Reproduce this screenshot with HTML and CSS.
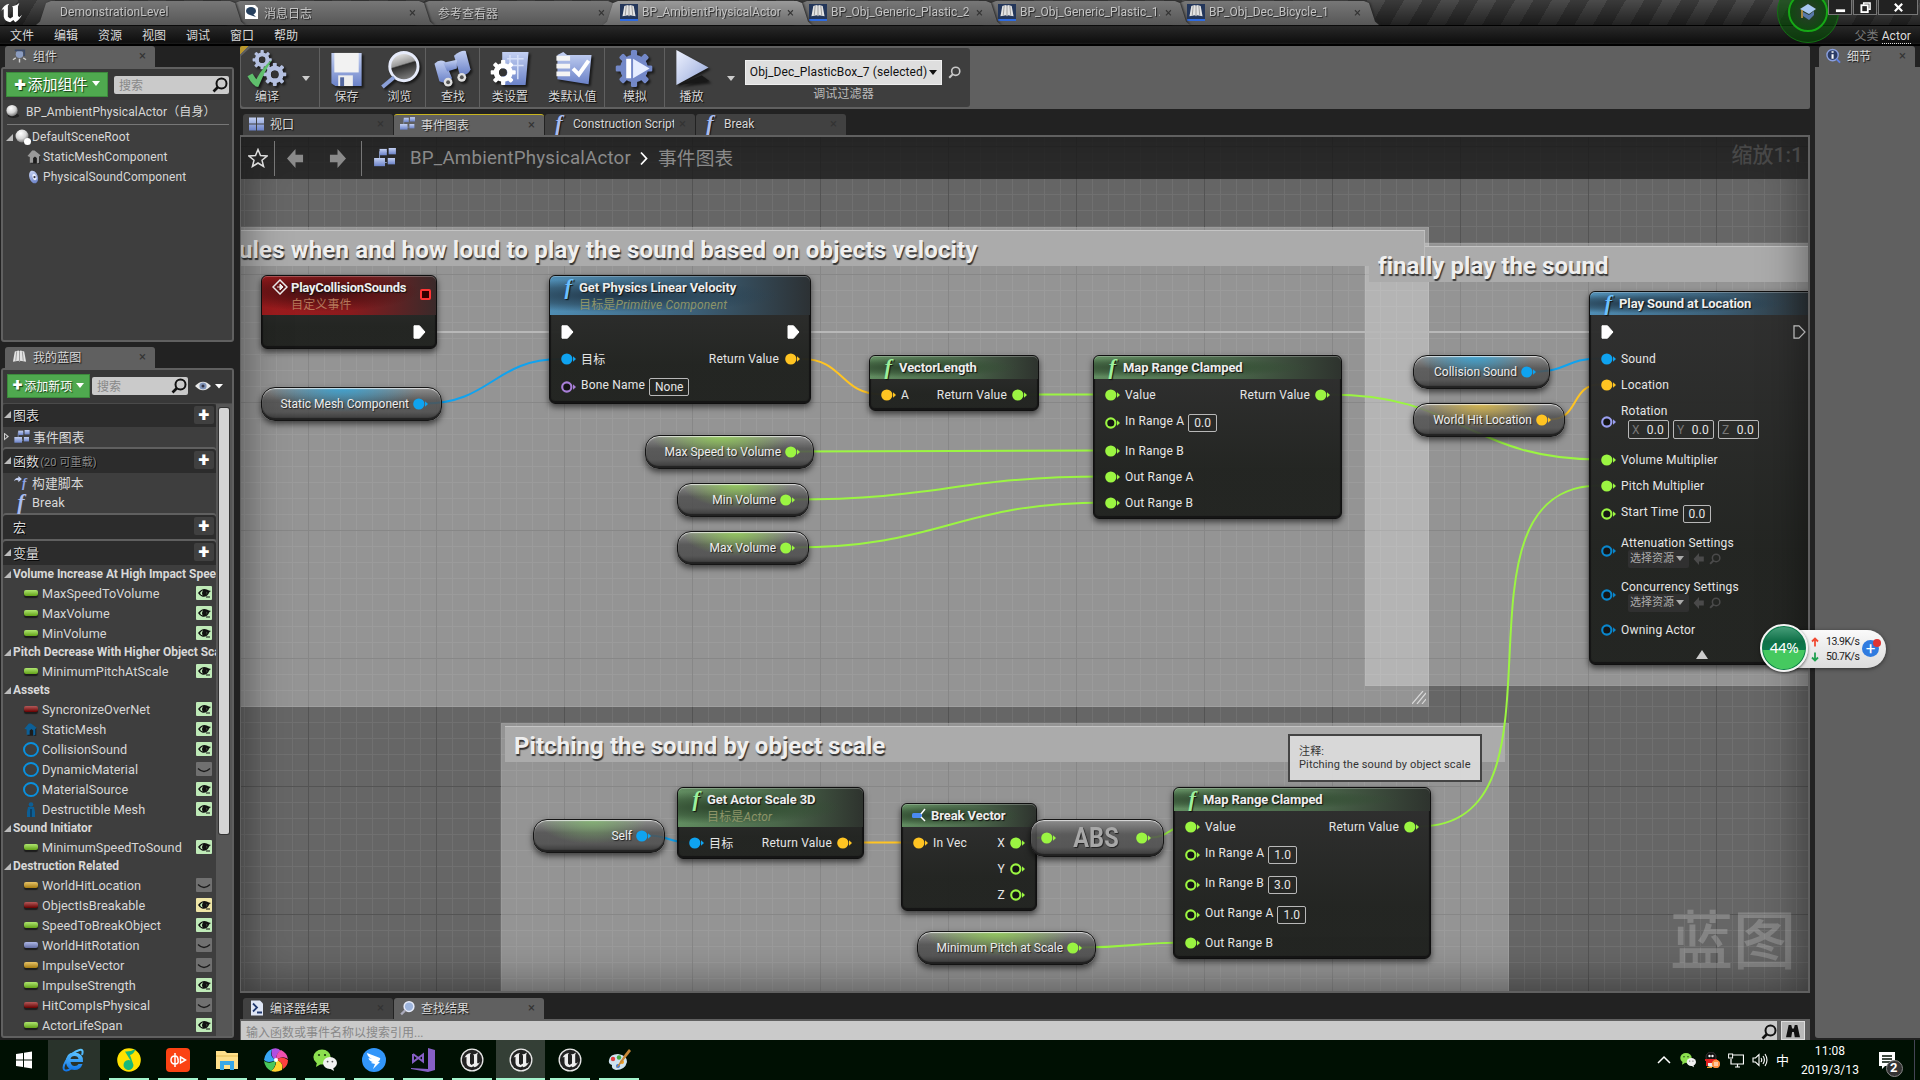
FILE: index.html
```html
<!DOCTYPE html>
<html lang="zh-CN">
<head>
    <meta charset="UTF-8">
    <title>BP_AmbientPhysicalActor</title>
    <link rel="stylesheet" href="styles.css">
</head>
<body>
    <svg class="sprite" width="0" height="0">
        <defs>
            <linearGradient id="gBlue" x1="0" y1="0" x2="0" y2="1"><stop offset="0" stop-color="#c3d0f2"/><stop offset="1" stop-color="#6b82c8"/></linearGradient>
            <linearGradient id="gPlay" x1="0" y1="0" x2="1" y2="1"><stop offset="0" stop-color="#eef2ff"/><stop offset="0.5" stop-color="#c2cdec"/><stop offset="1" stop-color="#8c9fd4"/></linearGradient>
            <linearGradient id="gLens" x1="0" y1="0" x2="0.3" y2="1"><stop offset="0" stop-color="#fff"/><stop offset="0.5" stop-color="#999"/><stop offset="0.55" stop-color="#2c2c2c"/><stop offset="1" stop-color="#777"/></linearGradient>
            <radialGradient id="gBall" cx="0.4" cy="0.3" r="0.7"><stop offset="0" stop-color="#fff"/><stop offset="0.6" stop-color="#d5d5d5"/><stop offset="1" stop-color="#777"/></radialGradient>
            <linearGradient id="gIE" x1="0" y1="0" x2="0" y2="1"><stop offset="0" stop-color="#5cc4ff"/><stop offset="1" stop-color="#1276e8"/></linearGradient>
            <symbol id="i-search" viewBox="0 0 16 16"><circle cx="9.5" cy="6.5" r="5" fill="none" stroke="currentColor" stroke-width="2"/><path d="M6 10 L1.5 14.5" stroke="currentColor" stroke-width="2.6"/></symbol>
            <symbol id="i-gear" viewBox="0 0 24 24"><g fill="currentColor"><rect x="10" y="0" width="4" height="6" rx="1"/><rect x="10" y="18" width="4" height="6" rx="1"/><rect x="0" y="10" width="6" height="4" rx="1"/><rect x="18" y="10" width="6" height="4" rx="1"/><rect x="10" y="0" width="4" height="6" rx="1" transform="rotate(45 12 12)"/><rect x="10" y="18" width="4" height="6" rx="1" transform="rotate(45 12 12)"/><rect x="10" y="0" width="4" height="6" rx="1" transform="rotate(135 12 12)"/><rect x="10" y="18" width="4" height="6" rx="1" transform="rotate(135 12 12)"/></g><circle cx="12" cy="12" r="6.5" fill="none" stroke="currentColor" stroke-width="5"/><circle cx="12" cy="12" r="3.6" fill="#333"/></symbol>
            <symbol id="i-graph" viewBox="0 0 24 22"><path d="M14 4 L6 4 L6 16 L14 16" fill="none" stroke="#8fa0c8" stroke-width="1"/><g fill="url(#gBlue)"><rect x="6" y="1" width="8" height="7"/><rect x="16" y="0" width="8" height="7"/><rect x="0" y="11" width="12" height="9"/><rect x="15" y="11" width="8" height="7"/></g></symbol>
            <symbol id="i-book" viewBox="0 0 16 16"><path d="M1 13 L3 2 L7 1 L8 2 L9 1 L13 2 L15 13 L9 12 L8 13 L7 12 Z" fill="#e4e4e4"/><path d="M8 2 V13 M5 2 L4 12 M11 2 L12 12" stroke="#888" stroke-width="0.8"/></symbol>
            <symbol id="i-ball" viewBox="0 0 16 16"><ellipse cx="9" cy="13" rx="6" ry="2.5" fill="#222"/><circle cx="7.5" cy="7.5" r="6" fill="url(#gBall)"/></symbol>
            <symbol id="i-house" viewBox="0 0 16 16"><path d="M4 15 V7 L8 2 L14 6 V15 Z" fill="#1c1c1c"/><path d="M0.500 7 L5.500 1 L8 1 L14.500 6 L13 7.500 V14 L10.500 15 V9 L8.500 7.500 L6.500 9 V14 H3 V8 Z" fill="currentColor"/></symbol>
            <symbol id="i-eye" viewBox="0 0 16 14"><path d="M2 7 Q7 0.5 13 4.5 L15 5 Q13 6 13 7 Q11 11.5 6 10.5 Q3.5 9.5 2 7 Z" fill="#111"/><path d="M4 7 Q6 4 7 4.6 Q5 7.5 7 9.6 Q4.5 9 4 7 Z M10.5 5.4 Q12 6.5 10.5 9 Q11.3 7 10.5 5.4 Z" fill="#bfeab8"/><path d="M10 11 L14 11" stroke="#111" stroke-width="1.2"/></symbol>
            <symbol id="i-closed" viewBox="0 0 16 14"><path d="M2 6.5 Q8 12.5 14 6.5" fill="none" stroke="#1c1c1c" stroke-width="1.3"/></symbol>
            <symbol id="i-pin" viewBox="0 0 15 12"><circle cx="5.8" cy="6" r="5.6" fill="currentColor"/><path d="M12 3.2 L15 6 L12 8.8 Z" fill="currentColor"/></symbol>
            <symbol id="i-pin-open" viewBox="0 0 15 12"><circle cx="5.8" cy="6" r="4.6" fill="#141414" stroke="currentColor" stroke-width="2.1"/><path d="M12 3.2 L15 6 L12 8.8 Z" fill="currentColor"/></symbol>
            <symbol id="i-exec" viewBox="0 0 13 14"><path d="M1 0.8 H6.5 L12 7 L6.5 13.2 H1 Z" fill="#fff" stroke="#fff"/></symbol>
            <symbol id="i-exec-open" viewBox="0 0 13 14"><path d="M1 0.8 H6 L12 7 L6 13.2 H1 Z" fill="none" stroke="#ddd" stroke-width="1.2"/></symbol>
            <symbol id="i-arrow" viewBox="0 0 18 20"><path d="M0 10 L9 0 V6 H17 V14 H9 V20 Z" fill="currentColor"/></symbol>
            <symbol id="i-ue" viewBox="0 0 24 24"><circle cx="12" cy="12" r="11.5" fill="#e8e8e8"/><circle cx="12" cy="12" r="10.2" fill="#222"/><path d="M4.5 10 Q6 5.5 11 5 L10 6.5 V15.5 L11.5 17 L14 15.5 V7.5 L13 6.5 Q15.5 6.5 18 4.5 L17.2 6.8 V15 L18.3 15.6 L20 14 Q18.5 18 14.5 19.3 L13.5 18.2 L11.5 19.3 Q7 18.8 6.5 15 V9 Q5.5 8.5 4.5 10 Z" fill="#eee"/></symbol>
            <symbol id="i-wechat" viewBox="0 0 24 24"><ellipse cx="9" cy="9" rx="8.6" ry="7.4" fill="#8be04e"/><path d="M4 14 L3 19 L8 16 Z" fill="#8be04e"/><circle cx="6" cy="7" r="1.1" fill="#1f3a10"/><circle cx="12" cy="7" r="1.1" fill="#1f3a10"/><ellipse cx="17" cy="15" rx="7" ry="6" fill="#f2f2f2"/><path d="M20 19 L21 23 L16 20 Z" fill="#f2f2f2"/><circle cx="14.6" cy="13.6" r="0.9" fill="#555"/><circle cx="19.4" cy="13.6" r="0.9" fill="#555"/></symbol>
        </defs>
    </svg>

    <header class="titlebar">
        <svg class="ue-logo" viewBox="0 0 24 24"><path d="M0 10 Q3 3 9 2 L7.5 4 V16 L10 18 L13 16 V6 L12 5 Q17 4 20 1 L18.5 5 V15 L20 16.5 L23 14 Q20 20 15.5 22 L13.5 19.5 L10 22 Q4 21 3 16 V8 Q1.5 7.5 0 10 Z" fill="#fff"/></svg>
        <div class="doc-tab t0"><span>DemonstrationLevel</span></div>
        <div class="doc-tab t1"><svg class="doc-ico" viewBox="0 0 14 16"><path d="M1 1 H11 L14 4 V15 H1 Z" fill="#fff"/><ellipse cx="7" cy="7" rx="5" ry="4" fill="#26405e"/><path d="M8 9 L12 13 L6 11 Z" fill="#26405e"/></svg><span>消息日志</span><i>×</i></div>
        <div class="doc-tab t2"><span>参考查看器</span><i>×</i></div>
        <div class="doc-tab t3 current"><svg class="bp-ico"><use href="#i-book"/></svg><span>BP_AmbientPhysicalActor</span><i>×</i></div>
        <div class="doc-tab t4"><svg class="bp-ico"><use href="#i-book"/></svg><span>BP_Obj_Generic_Plastic_2</span><i>×</i></div>
        <div class="doc-tab t5"><svg class="bp-ico"><use href="#i-book"/></svg><span>BP_Obj_Generic_Plastic_1.</span><i>×</i></div>
        <div class="doc-tab t6"><svg class="bp-ico"><use href="#i-book"/></svg><span>BP_Obj_Dec_Bicycle_1</span><i>×</i></div>
        <div class="tutorial"><div class="ring"><svg viewBox="0 0 18 18"><path d="M1 6 L9 1 L17 6 L10 11 Z" fill="#a8c8f0"/><path d="M4 9 L10 12 L15 8 V12 L10 17 L4 13 Z" fill="#5878a8"/><path d="M3 7 V15" stroke="#d0a050" stroke-width="1.5"/></svg></div></div>
        <div class="win-btns">
            <b><svg viewBox="0 0 12 12"><path d="M1 9.5 H11" stroke="#fff" stroke-width="3"/></svg></b>
            <b><svg viewBox="0 0 12 12"><path d="M4 3 V1 H11 V8 H9" fill="none" stroke="#fff" stroke-width="1.6"/><rect x="1.5" y="3.5" width="7" height="7.5" fill="none" stroke="#fff" stroke-width="2"/></svg></b>
            <b class="x"><svg viewBox="0 0 12 12"><path d="M2 2 L10 10 M10 2 L2 10" stroke="#fff" stroke-width="2.4"/></svg></b>
        </div>
    </header>

    <nav class="menubar">
        <span>文件</span><span>编辑</span><span>资源</span><span>视图</span><span>调试</span><span>窗口</span><span>帮助</span>
        <div class="parent">父类 <u>Actor</u></div>
    </nav>

    <main>
        <aside class="left">
            <div class="panel-tab"><svg class="ico15" viewBox="0 0 16 16"><circle cx="8" cy="6" r="4" fill="#8b9cc0"/><path d="M1 12 L4 10 M15 12 L12 10 M8 11 V15" stroke="#ccc" stroke-width="1.5"/><path d="M3 2 H13 V8" fill="none" stroke="#3c4a66" stroke-width="2"/></svg>组件<i>×</i></div>
            <section class="panel components">
                <div class="bar">
                    <button class="green big"><b>+</b>添加组件<em></em></button>
                    <div class="search">搜索<svg><use href="#i-search"/></svg></div>
                </div>
                <div class="self"><svg class="ico15"><use href="#i-ball"/></svg>BP_AmbientPhysicalActor（自身）</div>
                <div class="rule"></div>
                <div class="tree root"><em class="fold"></em><svg class="ico17" viewBox="0 0 17 17"><circle cx="7" cy="7" r="6.5" fill="url(#gBall)"/><circle cx="12.5" cy="12.5" r="3.5" fill="#fff"/></svg>DefaultSceneRoot</div>
                <div class="tree child"><svg class="ico15 grey"><use href="#i-house"/></svg>StaticMeshComponent</div>
                <div class="tree child"><svg class="ico15" viewBox="0 0 16 16"><ellipse cx="7" cy="8" rx="4.5" ry="7" fill="url(#gBlue)" transform="rotate(-20 7 8)"/><ellipse cx="8" cy="8" rx="2" ry="3.5" fill="#e8eeff" transform="rotate(-20 8 8)"/><circle cx="8" cy="8" r="1.2" fill="#334"/></svg>PhysicalSoundComponent</div>
            </section>
            <div class="panel-tab second"><svg class="ico15"><use href="#i-book"/></svg>我的蓝图<i>×</i></div>
            <section class="panel blueprint">
                <div class="bar">
                    <button class="green"><b>+</b>添加新项<em></em></button>
                    <div class="search">搜索<svg><use href="#i-search"/></svg></div>
                    <svg class="eye-btn" viewBox="0 0 28 12"><path d="M0 6 Q8 -2.5 16 6 Q8 14.500 0 6 Z" fill="#e8e8e8"/><circle cx="8" cy="6" r="3.600" fill="#7f93b8"/><circle cx="8" cy="6" r="1.500" fill="#334"/><path d="M20 4 H28 L24 8.500 Z" fill="#fff"/></svg>
                </div>
                <div class="lists">
                    <div class="members">
                        <div class="sec"><em class="fold"></em>图表<b>+</b></div>
                        <div class="item"><em class="fold closed"></em><svg class="ico16"><use href="#i-graph"/></svg>事件图表</div>
                        <div class="sec gap"><em class="fold"></em>函数<small>(20 可重载)</small><b>+</b></div>
                        <div class="item"><svg class="ico16" viewBox="0 0 16 16"><path d="M0 6 Q1 2 5 2 V0 L9 3.500 L5 7 V5 Q2 4 0 6 Z" fill="#c3d0f2"/><text x="9" y="13" class="f-sm">f</text></svg>构建脚本</div>
                        <div class="item"><span class="f-ico">f</span>Break</div>
                        <div class="sec gap"><em class="fold none"></em>宏<b>+</b></div>
                        <div class="sec gap"><em class="fold"></em>变量<b>+</b></div>
                        <div id="variables"></div>
                    </div>
                    <div class="scroll"><div class="thumb"></div></div>
                </div>
            </section>
        </aside>

        <section class="center">
            <div class="toolbar">
                <div class="tools">
                    <div class="tool w80"><svg viewBox="0 0 40 40"><g color="#b4c0e0"><use href="#i-gear" x="5" y="0" width="20" height="20"/><use href="#i-gear" x="16" y="13" width="24" height="24"/></g><path d="M0 27 L5 24 L9 30 Q16 17 25 10 Q17 23 11 38 Q6 38 0 27 Z" fill="#5fbf6c"/></svg>编译</div>
                    <div class="tool w53 sep"><svg viewBox="0 0 40 40"><path d="M4 3 H35 V37 H8 L4 34 Z" fill="url(#gBlue)"/><rect x="7" y="3" width="25" height="20" fill="#f2f2f2"/><rect x="11" y="26" width="15" height="11" fill="#eee"/><rect x="13" y="28" width="4" height="9" fill="#5468a0"/></svg>保存</div>
                    <div class="tool w53"><svg viewBox="0 0 40 40"><circle cx="24" cy="17" r="14.500" fill="url(#gLens)" stroke="#e6ebfa" stroke-width="3"/><path d="M14 28 L2 38" stroke="#8ba0d8" stroke-width="4"/></svg>浏览</div>
                    <div class="tool w54 sep"><svg viewBox="0 0 40 40"><g fill="url(#gBlue)"><path d="M1 14 Q6 9 12 12 L19 29 Q13 36 6 32 Z"/><path d="M21 6 Q28 0 33 1 L38 20 Q35 27 27 25 Z"/><path d="M10 13 L24 10 V19 L14 22 Z"/></g><circle cx="15" cy="33" r="4.500" fill="#e0e0e0"/><circle cx="29" cy="28" r="4.500" fill="#e0e0e0"/><circle cx="15" cy="33" r="2" fill="#555"/><circle cx="29" cy="28" r="2" fill="#555"/></svg>查找</div>
                    <div class="tool w60 sep"><svg viewBox="0 0 40 40"><path d="M12 2 H39 L36 36 H12 Z" fill="url(#gBlue)"/><path d="M17 9 H34 M17 16 H34 M20 5 V22 M28 5 V30" stroke="#d5dff8" stroke-width="1.500"/><g color="#fff"><use href="#i-gear" x="0" y="10" width="26" height="26"/></g></svg>类设置</div>
                    <div class="tool w65"><svg viewBox="0 0 40 40"><path d="M4 5 L10 2 L14 5 H39 L36 35 L4 30 Z" fill="url(#gBlue)"/><path d="M3 6 H17 V11 H3 Z M3 14 H17 V19 H3 Z M3 22 H17 V27 H3 Z" fill="#f4f4f4"/><path d="M20 19 L26 25 L36 11" fill="none" stroke="#fff" stroke-width="4"/></svg>类默认值</div>
                    <div class="tool w59 sep"><svg viewBox="0 0 40 40"><g color="#7388c8"><use href="#i-gear" x="0" y="0" width="38" height="38"/></g><circle cx="19" cy="19" r="8" fill="#7388c8"/><rect x="11" y="9" width="5" height="20" fill="#fff"/><path d="M18 9 L35 19 L18 29 Z" fill="#e4ecff"/></svg>模拟</div>
                    <div class="tool w53 sep"><svg viewBox="0 0 40 40"><path d="M6 36 L38 32 L30 26 Z" fill="#181818"/><path d="M4 0 L37 18 L4 36 Z" fill="url(#gPlay)"/></svg>播放</div>
                    <em class="drop"></em>
                    <div class="debug"><div class="combo">Obj_Dec_PlasticBox_7 (selected)<em></em></div>调试过滤器</div>
                    <svg class="debug-find"><use href="#i-search"/></svg>
                </div>
            </div>
            <div class="tabs">
                <div class="tab"><svg class="ico15" viewBox="0 0 15 15"><path d="M0 1 H7 V7 H0 Z M8 1 H15 V7 H8 Z M0 8 H7 V14 H0 Z M8 8 H15 V14 H8 Z" fill="url(#gBlue)"/></svg>视口<i>×</i></div>
                <div class="tab on top"><svg class="ico15"><use href="#i-graph"/></svg>事件图表<i>×</i></div>
                <div class="tab"><span class="f-ico">f</span><span class="cut">Construction Script</span><i>×</i></div>
                <div class="tab"><span class="f-ico">f</span>Break<i>×</i></div>
            </div>
            <div class="graph">
                <div class="comment c1"><h3>rules when and how loud to play the sound based on objects velocity</h3></div>
                <div class="comment c2"><h3></h3></div>
                <div class="corner"></div>
                <div class="comment-title">finally play the sound</div>
                <div class="comment c3"><h3>Pitching the sound by object scale</h3></div>
                <svg class="grip" viewBox="0 0 14 13"><path d="M0 13 L11 0 M5 13 L14 2 M10 13 L14 8" stroke="#d8d8d8" stroke-width="1.200"/></svg>
                <div class="watermark">蓝图</div>
                <svg class="wires" id="wires" viewBox="241 137 1567 854"></svg>
                <div id="nodes"></div>
                <div class="vignette"></div>
                <div class="crumbs">
                    <svg class="star" viewBox="0 0 20 20"><path d="M10 1.500 L12.500 7.500 L19 8 L14 12.200 L15.600 18.500 L10 15 L4.400 18.500 L6 12.200 L1 8 L7.500 7.500 Z" fill="none" stroke="#ddd" stroke-width="1.500"/></svg>
                    <s></s>
                    <svg class="nav"><use href="#i-arrow"/></svg>
                    <svg class="nav fwd"><use href="#i-arrow"/></svg>
                    <s></s>
                    <svg class="gico"><use href="#i-graph"/></svg>
                    <span>BP_AmbientPhysicalActor</span>
                    <svg class="chev" viewBox="0 0 8 14"><path d="M1 1 L6.500 7 L1 13" fill="none" stroke="#fff" stroke-width="1.800"/></svg>
                    <span class="cn">事件图表</span>
                    <div class="zoom">缩放1:1</div>
                </div>
                <div class="tip">注释:<br>Pitching the sound by object scale</div>
            </div>
            <div class="tabs bottom">
                <div class="tab"><svg class="ico15" viewBox="0 0 15 15"><path d="M2 0 H11 L14 3 V15 H2 Z" fill="#dfe6f5"/><path d="M4 3 L8 7 L4 11 M8 12 H13" fill="none" stroke="#223a70" stroke-width="1.800"/></svg>编译器结果<i>×</i></div>
                <div class="tab on"><svg class="ico15" viewBox="0 0 40 40"><circle cx="24" cy="16" r="13" fill="#9db4dc" stroke="#e6ebfa" stroke-width="4"/><path d="M14 26 L3 37" stroke="#aab" stroke-width="6"/></svg>查找结果<i>×</i></div>
            </div>
            <div class="find">
                <div class="find-in">输入函数或事件名称以搜索引用...<svg><use href="#i-search"/></svg></div>
                <div class="find-btn"><svg viewBox="0 0 16 16"><path d="M3 1 H6 L7 5 H9 L10 1 H13 L16 15 H10 L9 9 H7 L6 15 H0 Z" fill="#111"/></svg></div>
            </div>
        </section>

        <aside class="right">
            <div class="panel-tab"><svg class="ico15" viewBox="0 0 16 16"><circle cx="7" cy="7" r="6" fill="#2c3c66" stroke="#8aa0e0" stroke-width="1.500"/><path d="M7 3 V4.500 M7 6 V11" stroke="#fff" stroke-width="2.200"/><path d="M11 11 L15 15" stroke="#6080e0" stroke-width="2"/></svg>细节<i>×</i></div>
            <div class="blank"></div>
        </aside>
    </main>

    <footer class="taskbar">
        <div class="app start"><svg viewBox="0 0 20 20"><path d="M2 4 L9 3 V9.500 H2 Z M10 2.800 L18 1.500 V9.500 H10 Z M2 10.500 H9 V17 L2 16 Z M10 10.500 H18 V18.500 L10 17.200 Z" fill="#fff"/></svg></div>
        <div class="app ie"><svg viewBox="0 0 24 24"><path d="M4 15 Q3 5 12 4.500 Q22 5 21 14 H8.500 Q9.500 18.500 13 18 Q15.500 18 16.500 16 H20.500 Q18.500 22 12.500 22 Q5 21.500 4 15 Z M8.500 11 H16.500 Q16 8 12.500 8 Q9 8.200 8.500 11 Z" fill="url(#gIE)" fill-rule="evenodd"/><path d="M20 7 Q22 1 17.500 2 Q10 4 4 13 Q0 20 2.500 22 Q5 23.500 9 20.500" fill="none" stroke="url(#gIE)" stroke-width="2"/></svg></div>
        <div class="app run"><svg viewBox="0 0 24 24"><circle cx="12" cy="12" r="11.800" fill="#ffe100"/><path d="M18.500 1 Q13 4 8 3.500 L13.500 12.500 A5 5 0 1 0 16.500 17 L13 7 Q17 6 18.500 1 Z" fill="#17b97a"/></svg></div>
        <div class="app run"><svg viewBox="0 0 24 24"><rect width="24" height="24" rx="4" fill="#fb4213"/><path d="M9 5 V19 M9 8 Q5 8 5 12 Q5 16 9 16 Q13 16 12 12 Q12 8 9 8 M14.500 9 L19.500 12 L14.500 15 Z" fill="none" stroke="#fff" stroke-width="1.500"/></svg></div>
        <div class="app run"><svg viewBox="0 0 24 24"><path d="M1 3 H10 L12 5 H23 V21 H1 Z" fill="#ffe08a"/><path d="M1 8 H23" stroke="#e5bd55"/><path d="M5 13 H19 V22 H15 V17 H9 V22 H5 Z" fill="#38a8e8"/></svg></div>
        <div class="app run"><svg viewBox="0 0 24 24"><g stroke="none"><path d="M12 12 Q6 9 8 1 Q14 -1 17 3 Q12 5 12 12 Z" fill="#b04fe0"/><path d="M12 12 Q12 5 17 2 Q23 5 24 11 Q18 7 12 12 Z" fill="#f050b0"/><path d="M12 12 Q18 7 24 12 Q24 18 19 21 Q19 13 12 12 Z" fill="#ff4040"/><path d="M12 12 Q20 14 18 22 Q12 25 7 23 Q13 18 12 12 Z" fill="#ffd430"/><path d="M12 12 Q12 19 7 23 Q1 20 0 13 Q6 17 12 12 Z" fill="#49c85a"/><path d="M12 12 Q4 16 0 12 Q1 4 8 1 Q5 9 12 12 Z" fill="#37a6f5"/></g><circle cx="12" cy="12" r="2" fill="#fff"/></svg></div>
        <div class="app run"><svg><use href="#i-wechat"/></svg></div>
        <div class="app run"><svg viewBox="0 0 24 24"><circle cx="12" cy="12" r="12" fill="#3296fa"/><path d="M5 5 L18 10 Q19 11 16 14 H18 L11 21 L13 16 L9 15 Q10 14 11 14 Q7 13 6.500 10 L10 11 Q5.500 9 5 5 Z" fill="#fff"/></svg></div>
        <div class="app run"><svg viewBox="0 0 24 24"><path d="M17 0 L24 2 V22 L17 24 L0 21 V20 L17 21 Z" fill="#865fc5"/><path d="M2 6 V14 L12 6.500 V13.500 L2 6" fill="none" stroke="#865fc5" stroke-width="2"/></svg></div>
        <div class="app run"><svg><use href="#i-ue"/></svg></div>
        <div class="app run hot"><svg><use href="#i-ue"/></svg></div>
        <div class="app run"><svg><use href="#i-ue"/></svg></div>
        <div class="app run"><svg viewBox="0 0 24 24"><path d="M2 12 Q3 6 11 6 Q20 7 20 14 Q18 22 9 22 Q4 21 5 17 Q1 16 2 12 Z" fill="#cfe3f0"/><circle cx="6" cy="11" r="2.200" fill="#e04040"/><circle cx="12" cy="9.500" r="2.200" fill="#40a840"/><circle cx="15" cy="14" r="2" fill="#f0a020"/><circle cx="11" cy="18" r="2" fill="#3878e0"/><path d="M22 1 L18 6 L9 20 L12 18 L20 8 L24 3 Z" fill="#c88838"/></svg></div>
        <div class="tray">
            <svg class="t16" viewBox="0 0 16 16"><path d="M2 11 L8 5 L14 11" fill="none" stroke="#fff" stroke-width="1.500"/></svg>
            <svg class="t16"><use href="#i-wechat"/></svg>
            <svg class="t16" viewBox="0 0 16 16"><circle cx="7" cy="5" r="5" fill="#111" stroke="#333"/><circle cx="5.500" cy="4" r="1.200" fill="#fff"/><circle cx="8.500" cy="4" r="1.200" fill="#fff"/><ellipse cx="7" cy="11" rx="4" ry="4" fill="#eee"/><path d="M1 8 H12 V10 H3 V14" fill="none" stroke="#e02020" stroke-width="2"/><path d="M3 15.500 H8" stroke="#f0a020" stroke-width="1.500"/><circle cx="12" cy="12" r="4.200" fill="#ff9040"/><path d="M10 11 H14 M10 13 H14" stroke="#fff"/></svg>
            <svg class="t16" viewBox="0 0 16 16"><path d="M5 3 H15.500 V12 H3 V7 M7 15 H12 M9.500 12 V15" fill="none" stroke="#fff" stroke-width="1.200"/><rect x="0.600" y="2" width="4" height="4" fill="none" stroke="#fff"/></svg>
            <svg class="t16" viewBox="0 0 16 16"><path d="M1 6 H3.500 L7 2.500 V13.500 L3.500 10 H1 Z M9 6 Q10.500 8 9 10 M11 4 Q13.800 8 11 12 M13 2 Q17 8 13 14" fill="none" stroke="#fff" stroke-width="1.100"/></svg>
            <span class="ime">中</span>
        </div>
        <div class="clock">11:08<br>2019/3/13</div>
        <div class="notif"><svg viewBox="0 0 26 28"><path d="M2 2 H18 V16 H8 L5 19 V16 H2 Z" fill="#fff"/><path d="M5 6 H15 M5 9 H15 M5 12 H15" stroke="#001003" stroke-width="1.300"/><circle cx="17.500" cy="18.500" r="8" fill="#333" stroke="#888"/></svg><b>2</b></div>
    </footer>

    <div class="net">
        <div class="rates">
            <p><svg class="up" viewBox="0 0 8 10"><path d="M4 9.500 V2 M1 4.500 L4 1.500 L7 4.500" fill="none" stroke="currentColor" stroke-width="1.800"/></svg>13.9K/s</p>
            <p><svg class="down" viewBox="0 0 8 10"><path d="M4 0.500 V8 M1 5.500 L4 8.500 L7 5.500" fill="none" stroke="currentColor" stroke-width="1.800"/></svg>50.7K/s</p>
        </div>
        <div class="plus">+</div>
        <div class="orb">44%</div>
    </div>

    <script src="script.js"></script>
</body>
</html>
```
FILE: styles.css
```css
* {
    box-sizing: border-box;
}
body {
    margin: 0;
    width: 1920px;
    height: 1080px;
    overflow: hidden;
    display: flex;
    flex-direction: column;
    background: #222;
    color: #d8d8d8;
    font-family: Roboto, "Noto Sans CJK SC", sans-serif;
    font-size: 12px;
    letter-spacing: 0.1px;
}
svg {
    display: block;
    flex: none;
}
i, em {
    font-style: normal;
}
.sprite {
    position: absolute;
}
.ico15 { width: 15px; height: 16px; }
.ico16 { width: 16px; height: 14px; }
.ico17 { width: 17px; height: 17px; }

/* window title */
.titlebar {
    height: 25px;
    flex: none;
    display: flex;
    position: relative;
    background: linear-gradient(rgba(0,0,0,0), rgba(0,0,0,0.55)), repeating-linear-gradient(120deg, #4b4b4b 0 16px, #3a3a3a 16px 32px);
}
.ue-logo {
    width: 24px;
    height: 22px;
    margin: 2px 12px 0 0;
}
.doc-tab {
    position: relative;
    width: 209px;
    margin-right: -20px;
    height: 24px;
    margin-top: 1px;
    padding: 0 18px 2px 24px;
    display: flex;
    align-items: center;
    color: #c4c4c4;
    letter-spacing: 0;
    text-shadow: 1px 1px 1px #222;
    filter: drop-shadow(1px 0 1px #222);
}
.doc-tab::before {
    content: "";
    position: absolute;
    inset: 0;
    z-index: -1;
    background: linear-gradient(#777, #575757);
    clip-path: polygon(0 100%, 4px 85%, 10px 8%, 15px 0, 194px 0, 199px 8%, 205px 85%, 209px 100%);
}
.doc-tab.current::before {
    background: linear-gradient(#9a9a9a, #6a6a6a);
}
.t0 { z-index: 7; letter-spacing: 0.1px; }
.t1 { z-index: 6; }
.t2 { z-index: 5; }
.t3 { z-index: 8; }
.t4 { z-index: 4; }
.t5 { z-index: 3; }
.t6 { z-index: 2; }
.doc-tab span {
    white-space: nowrap;
    overflow: hidden;
    max-width: 140px;
}
.doc-tab i, .tab i, .panel-tab i {
    margin-left: auto;
    color: #333;
    font-size: 13px;
    text-shadow: none;
}
.doc-ico {
    width: 14px;
    height: 16px;
    margin: 0 6px 0 -5px;
}
.bp-ico {
    width: 18px;
    height: 17px;
    margin: 0 4px 0 -7px;
    background: #23365a;
    border-bottom: 2px solid #2f6be0;
}
.tutorial {
    position: absolute;
    left: 1777px;
    top: -19px;
    width: 62px;
    height: 62px;
    border-radius: 50%;
    background: rgba(10,90,10,0.55);
    border: 1px solid #137013;
    z-index: 9;
    padding: 10px;
}
.ring {
    width: 40px;
    height: 40px;
    border-radius: 50%;
    border: 2px solid #16a816;
    background: radial-gradient(#2b3a2b, #064d06);
    padding: 9px;
}
.ring svg {
    width: 18px;
    height: 18px;
}
.win-btns {
    position: absolute;
    right: 2px;
    top: 0;
    z-index: 10;
    display: flex;
    gap: 1px;
}
.win-btns b {
    width: 24px;
    height: 15px;
    border: 1px solid #777;
    border-top: none;
    background: #222;
    display: flex;
    justify-content: center;
    align-items: center;
}
.win-btns b.x { width: 40px; }
.win-btns svg {
    width: 11px;
    height: 11px;
}
.menubar {
    height: 21px;
    flex: none;
    border-top: 1px solid #000;
    border-bottom: 2px solid #000;
    background: linear-gradient(#282828, #0f0f0f 90%, #1c1c1c);
    display: flex;
    align-items: center;
    padding: 0 9px 2px 10px;
    position: relative;
    z-index: 0;
}
.menubar span {
    width: 44px;
}
.parent {
    margin-left: auto;
    color: #777;
}
.parent u {
    color: #ddd;
    text-decoration: none;
    border-bottom: 1px dotted #ddd;
}

main {
    height: 994px;
    flex: none;
    display: flex;
}

/* left docks */
.left {
    width: 240px;
    flex: none;
}
.panel-tab {
    margin-left: 5px;
    width: 150px;
    height: 21px;
    background: #606060;
    border-radius: 3px 3px 0 0;
    display: flex;
    align-items: center;
    gap: 6px;
    padding: 0 9px 2px 7px;
    text-shadow: 1px 1px 1px #111;
}
.panel-tab.second {
    margin-top: 5px;
}
.panel {
    margin-left: 1px;
    width: 233px;
    border: 2px solid #606060;
    border-radius: 3px;
    background: #3e3e3e;
    overflow: hidden;
}
.components { height: 275px; }
.bar {
    display: flex;
    background: #383838;
}
.components .bar {
    height: 31px;
    padding: 3px 3px 0;
    gap: 6px;
}
.green {
    border: 1px solid #3c8a3c;
    background: #4fa94f;
    color: #fff;
    font: inherit;
    padding: 0 0 2px;
    width: 83px;
    height: 24px;
    display: flex;
    align-items: center;
    justify-content: center;
    gap: 2px;
    text-shadow: 1px 1px 1px #143814;
}
.green.big {
    width: 102px;
    height: 25px;
    font-size: 15px;
    letter-spacing: 0;
}
.green b {
    font-size: 21px;
    line-height: 18px;
    font-weight: 900;
}
.green em, .combo em, .asset em {
    border: 4px solid transparent;
    border-top: 5px solid currentColor;
    border-bottom: none;
    margin-left: 2px;
}
.search {
    width: 115px;
    height: 18px;
    margin-top: 4px;
    background: #cacaca;
    border-radius: 2px;
    color: #888;
    display: flex;
    align-items: center;
    justify-content: space-between;
    padding: 0 1px 1px 5px;
}
.search svg {
    width: 16px;
    height: 16px;
    color: #111;
}
.self {
    height: 23px;
    display: flex;
    align-items: center;
    gap: 6px;
    padding: 0 3px 2px 2px;
    margin-bottom: 1px;
    white-space: nowrap;
}
.rule {
    height: 1px;
    background: #777;
    margin: 0 3px 2px 4px;
}
.tree {
    height: 20px;
    display: flex;
    align-items: center;
    white-space: nowrap;
}
.tree.child { padding-left: 24px; gap: 1px; }
.tree.root { padding-left: 3px; }
.grey { color: #999; }
.fold {
    flex: none;
    width: 0;
    height: 0;
    border-left: 7px solid transparent;
    border-bottom: 7px solid #bbb;
    margin-right: 2px;
}
.fold.none { visibility: hidden; }
.fold.closed {
    width: 5px;
    height: 8px;
    border: none;
    background: #ccc;
    clip-path: polygon(0 0, 100% 50%, 0 100%, 0 0, 1px 2px, 1px 6px, 3px 4px, 1px 2px);
}
.blueprint { height: 670px; }
.blueprint .bar {
    height: 34px;
    padding: 4px 4px 0;
    gap: 2px;
    border-bottom: 1px solid #4a4a4a;
}
.blueprint .green b { font-size: 18px; }
.blueprint .search {
    width: 96px;
    margin-top: 3px;
}
.eye-btn {
    width: 28px;
    height: 12px;
    margin: 6px 0 0 5px;
}
.lists {
    display: flex;
    height: 632px;
}
.members {
    width: 213px;
    overflow: hidden;
    white-space: nowrap;
}
.sec {
    height: 24px;
    background: #2c2c2c;
    border-radius: 3px 3px 0 0;
    font-size: 13px;
    display: flex;
    align-items: center;
    padding: 0 2px 2px 1px;
    text-shadow: 1px 1px 0 #000;
}
.sec.gap {
    border-top: 0;
    box-shadow: 0 -2px 0 #606060;
    margin-top: 2px;
}
.sec:first-child {
    height: 23px;
}
.sec small {
    font-size: 11px;
    color: #888;
    margin: 2px 0 0 1px;
}
.sec b {
    margin-left: auto;
    width: 20px;
    height: 18px;
    border-radius: 2px;
    background: #404040;
    color: #fff;
    font-size: 20px;
    line-height: 17px;
    text-align: center;
    font-weight: 900;
    text-shadow: none;
}
.item {
    height: 20px;
    display: flex;
    align-items: center;
    gap: 3px;
    padding: 0 0 1px 10px;
    font-size: 12.8px;
}
.item .fold.closed { margin: 0 2px 0 -9px; }
.f-ico {
    font: italic bold 22px/16px "Liberation Serif", serif;
    width: 16px;
    text-align: center;
    color: #a9bdf0;
    flex: none;
    position: relative;
    top: -1px;
}
.f-sm {
    font: italic bold 15px "Liberation Serif", serif;
    fill: #8fa5e8;
}
.cat {
    height: 18px;
    display: flex;
    align-items: center;
    font-weight: bold;
    padding-left: 1px;
    letter-spacing: -0.03px;
}
.var {
    height: 20px;
    display: flex;
    align-items: center;
    padding: 0 4px 0 21px;
    font-size: 12.7px;
    letter-spacing: 0.05px;
}
.var .vi {
    width: 14px;
    margin-right: 4px;
    flex: none;
    display: flex;
    justify-content: center;
}
.pill {
    width: 14px;
    height: 6px;
    border-radius: 2px;
    background: linear-gradient(rgba(255,255,255,0.35), rgba(0,0,0,0.25)) currentColor;
    box-shadow: 0 2px 1px #1c1c1c;
}
.circle {
    width: 16px;
    height: 15px;
    border: 2.5px solid #0a90dd;
    border-radius: 50%;
    margin: 0 -1px;
    flex: none;
}
.mesh {
    width: 14px;
    height: 15px;
    color: #0d5f96;
}
.var .eye {
    margin-left: auto;
    width: 16px;
    height: 14px;
    border-radius: 1px;
    background: #bfeab8;
}
.var .eye.yellow { background: #efe6a6; }
.var .eye.off { background: #707070; }
.scroll {
    width: 16px;
    background: #565656;
    padding: 4px 0 0 3px;
}
.thumb {
    width: 10px;
    height: 426px;
    background: #d4d4d4;
    border-radius: 2px;
    box-shadow: 0 0 0 1px #333;
}

/* center */
.center {
    width: 1570px;
    flex: none;
}
.toolbar {
    height: 63px;
    background: linear-gradient(135deg, #b8962c 0 6px, transparent 6px), #606060;
    border-radius: 2px;
    padding: 2px 1px;
}
.tools {
    width: 729px;
    height: 59px;
    background: #3e3e3e;
    border-radius: 3px;
    display: flex;
    clip-path: polygon(9px 0, 100% 0, 100% 100%, 0 100%, 0 8px);
}
.tool {
    display: flex;
    flex-direction: column;
    align-items: center;
    padding-top: 2px;
    line-height: 17px;
    text-shadow: 1px 1px 1px #000;
}
.tool svg {
    width: 40px;
    height: 39px;
    filter: drop-shadow(2px 2px 1px rgba(0,0,0,0.6));
}
.w80 { width: 79px; padding-right: 27px; position: relative; }
.w80::after {
    content: "";
    position: absolute;
    left: 61px;
    top: 28px;
    border: 4px solid transparent;
    border-top: 5px solid #ccc;
    border-bottom: none;
}
.w53 { width: 53px; }
.w54 { width: 54px; }
.w59 { width: 60px; }
.w60 { width: 60px; }
.w65 { width: 65px; }
.sep { box-shadow: -1px 0 0 #606060; }
.drop {
    margin: 28px 0 0 9px;
    height: 5px;
    border: 4px solid transparent;
    border-top: 5px solid #ccc;
    border-bottom: none;
}
.debug {
    width: 197px;
    margin: 12px 0 0 10px;
    text-align: center;
    line-height: 19px;
    color: #bbb;
}
.combo {
    height: 25px;
    background: #dedede;
    border: 1px solid #eee;
    color: #111;
    display: flex;
    align-items: center;
    justify-content: center;
    white-space: nowrap;
}
.debug-find {
    width: 13px;
    height: 13px;
    margin: 18px 0 0 6px;
    color: #c8c8c8;
}
.tabs {
    display: flex;
    gap: 1px;
    height: 26px;
    padding: 5px 0 0 3px;
}
.tab {
    width: 150px;
    background: #414141;
    border-radius: 3px 3px 0 0;
    display: flex;
    align-items: center;
    gap: 6px;
    padding: 0 9px 2px 6px;
    text-shadow: 1px 1px 1px #111;
    white-space: nowrap;
    letter-spacing: 0;
}
.tab.on { background: #606060; }
.tab.top { border-top: 1px solid #c8b41e; }
.cut {
    width: 101px;
    overflow: hidden;
    margin-right: -7px;
}
.graph {
    position: relative;
    height: 858px;
    border: 2px solid #606060;
    border-left-width: 1px;
    overflow: hidden;
    background:
        linear-gradient(90deg, #545454 1px, transparent 1px) 67px 9px / 128px 128px,
        linear-gradient(#545454 1px, transparent 1px) 67px 9px / 128px 128px,
        linear-gradient(90deg, #707070 1px, transparent 1px) 3px 9px / 16px 16px,
        linear-gradient(#707070 1px, transparent 1px) 3px 9px / 16px 16px,
        #666;
}
.comment {
    position: absolute;
    background: rgba(255,255,255,0.3);
    padding: 3px 4px;
    box-shadow: inset 0 0 0 1px rgba(255,255,255,0.06);
}
.comment h3 {
    margin: 0;
    height: 36px;
    background: #ababab;
    border-top: 1px solid #c4c4c4;
}
.comment h3, .comment-title {
    font-size: 24px;
    line-height: 38px;
    font-weight: bold;
    color: #efefef;
    text-shadow: 1px 2px 1px #333;
    white-space: nowrap;
    letter-spacing: 0.06px;
    padding-left: 9px;
}
.comment.c1 { left: -24px; top: 90px; width: 1212px; height: 480px; }
.comment.c1 h3 { letter-spacing: 0.17px; }
.comment.c2 { left: 1124px; top: 106px; width: 500px; height: 443px; }
.comment.c3 { left: 260px; top: 586px; width: 1008px; height: 300px; }
.comment-title {
    position: absolute;
    left: 1128px;
    top: 110px;
}
/* part of the first header that stays above the second comment */
.corner {
    position: absolute;
    left: 1124px;
    top: 94px;
    width: 60px;
    height: 35px;
    background: #ababab;
    border-right: 1px solid #bcbcbc;
}
.grip {
    position: absolute;
    left: 1171px;
    top: 554px;
    width: 14px;
    height: 13px;
}
.watermark {
    position: absolute;
    left: 1429px;
    top: 760px;
    font-size: 63px;
    line-height: 90px;
    font-weight: 500;
    color: rgba(255,255,255,0.2);
}
.wires {
    position: absolute;
    inset: 0;
    width: 1567px;
    height: 854px;
}
.wires path {
    fill: none;
    stroke-width: 2;
}
.vignette {
    position: absolute;
    inset: 0;
    box-shadow: inset 0 0 45px rgba(0,0,0,0.5);
    pointer-events: none;
}
.crumbs {
    position: absolute;
    left: 0;
    right: 0;
    top: 0;
    height: 42px;
    background: rgba(25,25,25,0.78);
    display: flex;
    align-items: center;
    padding: 0 5px 0 7px;
    font-size: 18.7px;
    letter-spacing: 0.2px;
    color: #8a8a8a;
}
.crumbs s {
    width: 1px;
    height: 35px;
    background: #777;
}
.crumbs .cn {
    padding-bottom: 4px;
}
.star { width: 20px; height: 20px; margin-right: 6px; }
.nav { width: 17px; height: 21px; margin-left: 12px; color: #8a8a8a; }
.nav.fwd { transform: scaleX(-1); margin: 0 15px 0 25px; }
.gico { width: 24px; height: 20px; margin: 0 13px 0 11px; }
.chev { width: 8px; height: 15px; margin: 0 10px 0 9px; }
.zoom {
    margin-left: auto;
    font-size: 21px;
    font-weight: 500;
    letter-spacing: 0;
    color: #474747;
    line-height: 30px;
    padding-bottom: 6px;
}
.tip {
    position: absolute;
    left: 1047px;
    top: 597px;
    width: 194px;
    height: 48px;
    border: 2px solid #444;
    background: rgba(218,218,218,0.96);
    color: #333;
    font-size: 11px;
    line-height: 13px;
    padding: 9px 9px;
    white-space: nowrap;
    letter-spacing: 0.14px;
}

/* graph nodes */
.node {
    position: absolute;
    border: 1px solid #101010;
    border-radius: 6px;
    background: linear-gradient(rgba(46,46,46,0.97), rgba(32,34,31,0.97) 70%);
    box-shadow: 0 3px 6px rgba(0,0,0,0.6), inset 0 -1px 1px 1px #151515;
    color: #e6e6e6;
    letter-spacing: 0.2px;
    white-space: nowrap;
}
.head {
    position: relative;
    height: 23px;
    border-radius: 5px 5px 0 0;
    padding: 4px 0 0 29px;
    font-size: 13px;
    font-weight: bold;
    line-height: 16px;
    color: #eee;
    letter-spacing: -0.08px;
    text-shadow: 1px 1px 1px #111;
    box-shadow: inset 0 1px 0 rgba(255,255,255,0.25);
}
.head.tall { height: 39px; }
.event .head { letter-spacing: -0.25px; }
.head small {
    display: block;
    font-size: 12px;
    line-height: 18px;
    font-weight: normal;
    color: #8d9468;
    text-shadow: none;
    letter-spacing: 0.15px;
}
.head small q {
    quotes: none;
    font-style: italic;
}
.head .f-ico, .head svg {
    position: absolute;
    left: 10px;
    top: 3px;
}
.head .f-ico { font-size: 22px; }
.blue .head { background: radial-gradient(ellipse at 25% 50%, #22384a 0, rgba(40,66,84,0.6) 35%, transparent 60%), linear-gradient(90deg, #4f8db4, #3c6078 55%, #2c3134); }
.blue .f-ico { color: #6cc0ff; }
.func .head { background: radial-gradient(ellipse at 25% 50%, #2c452c 0, rgba(50,78,50,0.6) 35%, transparent 60%), linear-gradient(90deg, #618c60, #4a664a 55%, #2e332e); }
.func .f-ico { color: #9cf09c; }
.event .head { background: radial-gradient(ellipse at 35% 40%, #3c1012 0, rgba(80,16,18,0.6) 35%, transparent 60%), linear-gradient(90deg, #a01c1e, #8a1a1d 50%, #3a2a2a); }
.event .head small { color: #b5775a; }
.event .red {
    position: absolute;
    right: 5px;
    top: 13px;
    width: 11px;
    height: 11px;
    border: 2px solid #ff3434;
    border-radius: 2px;
    background: #300;
}
.pins {
    display: flex;
    justify-content: space-between;
    padding: 2.5px 11px 0 11px;
}
.pins.exec { padding: 3.5px 10px 0 11px; }
.pin {
    display: flex;
    align-items: center;
    gap: 5px;
}
.right-pins .pin { justify-content: flex-end; }
.exec .right-pins .pin { gap: 6px; }
.pin svg {
    width: 15px;
    height: 12px;
}
.pin svg.ex {
    width: 13px;
    height: 14px;
}
.field {
    display: inline-block;
    border: 1px solid #b8b8b8;
    border-radius: 2px;
    height: 18px;
    line-height: 16px;
    padding: 0 5px;
    margin-left: 4px;
    letter-spacing: 0;
    position: relative;
    top: 0;
}
.lab { position: relative; top: -2px; }
.stack {
    line-height: 16px;
    padding-top: 1px;
}
.stack.rot { margin-top: -3px; }
.vec {
    display: flex;
    gap: 4px;
    margin: 1px 0 0 7px;
}
.vec span {
    width: 41px;
    height: 19px;
    line-height: 18px;
    border: 1px solid #b8b8b8;
    border-radius: 2px;
    padding: 0 4px 0 3px;
    display: flex;
    justify-content: space-between;
}
.vec i { color: #777; }
.asset {
    display: flex;
    align-items: center;
    margin: -1px 0 0 7px;
    height: 18px;
    color: #333;
    gap: 4px;
}
.asset span {
    background: #303030;
    width: 61px;
    height: 18px;
    padding-left: 2px;
    display: flex;
    align-items: center;
    font-size: 11px;
    border-radius: 2px;
    color: #aaa;
    letter-spacing: 0;
}
.asset .stk, .asset svg { width: 12px; height: 12px; color: #4a4a4a; }
.more {
    position: absolute;
    left: 106px;
    bottom: 5px;
    border: 6px solid transparent;
    border-bottom: 9px solid #ccc;
    border-top: none;
}
.var-node {
    position: absolute;
    height: 34px;
    border: 1px solid #151515;
    border-radius: 14px;
    color: #eee;
    letter-spacing: 0;
    display: flex;
    align-items: center;
    justify-content: flex-end;
    gap: 4px;
    padding: 0 13px 0 16px;
    white-space: nowrap;
    background:
        radial-gradient(ellipse 42% 75% at 45% 0, var(--glow), transparent),
        linear-gradient(rgba(140,140,140,0.85), rgba(80,80,80,0.85) 40%, rgba(76,76,76,0.85) 75%, rgba(45,45,45,0.9));
    box-shadow: 0 3px 6px rgba(0,0,0,0.6), inset 0 1px 1px rgba(255,255,255,0.7), inset 0 -2px 1px #222;
    text-shadow: 1px 1px 1px #222;
}
.var-node svg {
    width: 15px;
    height: 12px;
}
.abs {
    height: 38px;
    padding: 0 12px 1px 10px;
    justify-content: space-between;
    color: #a8a8a8;
}
.abs b {
    font-size: 28px;
    transform: scaleX(0.84);
}

.tabs.bottom { height: 26px; }
.find {
    height: 21px;
    background: #606060;
    padding: 2px 5px 0 1px;
    display: flex;
    gap: 4px;
}
.find-in {
    width: 1536px;
    background: #cacaca;
    color: #888;
    padding: 2px 0 0 5px;
    display: flex;
    align-items: center;
    justify-content: space-between;
    letter-spacing: 0;
}
.find-in svg {
    width: 16px;
    height: 16px;
    color: #111;
}
.find-btn {
    width: 24px;
    background: #b8b8b8;
    border: 1px solid #ddd;
    padding: 1px 4px;
}
.find-btn svg {
    width: 14px;
    height: 16px;
}

.right {
    margin-left: 5px;
    width: 105px;
}
.right .panel-tab {
    margin-left: 4px;
    width: 96px;
}
.blank {
    height: 971px;
    background: #606060;
    border-radius: 0 0 0 3px;
}

/* windows taskbar */
.taskbar {
    height: 40px;
    flex: none;
    background: #001003;
    display: flex;
    color: #fff;
}
.app {
    width: 49px;
    height: 40px;
    display: flex;
    align-items: center;
    justify-content: center;
    position: relative;
}
.app svg {
    width: 24px;
    height: 24px;
}
.app.start { width: 48px; }
.app.start svg { width: 20px; height: 20px; }
.app.ie {
    width: 52px;
    background: #29332b;
    margin-right: 4px;
}
.run::after {
    content: "";
    position: absolute;
    left: 5px;
    right: 4px;
    bottom: 0;
    height: 2px;
    background: #a4f4cd;
}
.hot {
    background: #343f36;
}
.hot::after { left: 0; right: 0; }
.tray {
    margin-left: auto;
    display: flex;
    align-items: center;
    gap: 8px;
}
.t16 {
    width: 16px;
    height: 16px;
}
.ime { font-size: 13px; width: 14px; padding-bottom: 2px; }
.clock {
    width: 70px;
    margin-left: 5px;
    text-align: center;
    line-height: 19px;
    padding-top: 2px;
}
.notif {
    position: relative;
    width: 50px;
    padding: 10px 0 0 12px;
    margin-right: 5px;
    border-right: 1px solid #445;
}
.notif svg { width: 26px; height: 28px; }
.notif b {
    position: absolute;
    left: 25px;
    top: 20px;
    font-size: 13px;
}

/* floating network meter */
.net {
    position: absolute;
    left: 1784px;
    top: 630px;
    width: 102px;
    height: 38px;
    border-radius: 0 19px 19px 0;
    background: linear-gradient(#fafafa, #dcdcdc);
    box-shadow: 0 1px 4px rgba(0,0,0,0.5);
    z-index: 20;
    padding: 4px 0 0 27px;
    font: 10.5px/15px Roboto, sans-serif;
    color: #222;
}
.rates p {
    margin: 0;
    display: flex;
    align-items: center;
    letter-spacing: -0.5px;
}
.rates svg {
    width: 8px;
    height: 10px;
    margin-right: 7px;
}
.up { color: #f04a32; }
.down { color: #20a050; }
.plus {
    position: absolute;
    left: 78px;
    top: 10px;
    width: 17px;
    height: 17px;
    border-radius: 50%;
    background: #2f7be0;
    color: #fff;
    font-size: 17px;
    line-height: 17px;
    text-align: center;
}
.plus::after {
    content: "";
    position: absolute;
    right: -2px;
    top: -1px;
    width: 8px;
    height: 8px;
    border-radius: 50%;
    background: #e03434;
}
.orb {
    position: absolute;
    left: -24px;
    top: -6px;
    width: 48px;
    height: 48px;
    border-radius: 50%;
    border: 2px solid #f4f4f4;
    box-shadow: inset 0 0 0 1px #0b7a4a, 0 1px 3px rgba(0,0,0,0.6);
    background: linear-gradient(#4aa07c, #0f7048 35%, #0c7a4c 55%, #45c95f 55%);
    color: #fff;
    font: 15px/42px "Noto Sans", sans-serif;
    letter-spacing: -0.3px;
    text-align: center;
}
```
FILE: script.js
```js
const GREEN = '#9bf542', BLUE = '#0fa3f0', YELLOW = '#ffc422', VIOLET = '#9a9ff0', DEEP = '#0a86cc', PURPLE = '#a97fd8';
const ORIGIN_X = 241, ORIGIN_Y = 137;

const variables = [
    ['Volume Increase At High Impact Speed'],
    ['MaxSpeedToVolume', '#84d822', 'on'], ['MaxVolume', '#84d822', 'on'], ['MinVolume', '#84d822', 'on'],
    ['Pitch Decrease With Higher Object Scale'],
    ['MinimumPitchAtScale', '#84d822', 'on'],
    ['Assets'],
    ['SyncronizeOverNet', '#8a0000', 'on'], ['StaticMesh', 'mesh', 'on'], ['CollisionSound', 'circle', 'on'],
    ['DynamicMaterial', 'circle', 'off'], ['MaterialSource', 'circle', 'on'], ['Destructible Mesh', 'figure', 'on'],
    ['Sound Initiator'],
    ['MinimumSpeedToSound', '#84d822', 'on'],
    ['Destruction Related'],
    ['WorldHitLocation', '#dba316', 'off'], ['ObjectIsBreakable', '#8a0000', 'yellow'], ['SpeedToBreakObject', '#84d822', 'on'],
    ['WorldHitRotation', '#8290d8', 'off'], ['ImpulseVector', '#dba316', 'off'], ['ImpulseStrength', '#84d822', 'on'],
    ['HitCompIsPhysical', '#8a0000', 'off'], ['ActorLifeSpan', '#84d822', 'on']
];

function varIcon(kind) {
    if (kind === 'circle') return '<div class="circle"></div>';
    if (kind === 'mesh') return '<svg class="mesh"><use href="#i-house"/></svg>';
    if (kind === 'figure') return '<svg class="mesh" viewBox="0 0 14 15"><circle cx="7" cy="2.500" r="2.300" fill="currentColor"/><path d="M4 5 H10 L11 10 V15 H3 V10 Z" fill="currentColor"/><path d="M7 7 V15" stroke="#123"/></svg>';
    return `<div class="pill" style="color:${kind}"></div>`;
}

document.getElementById('variables').innerHTML = variables.map(v => v.length === 1
    ? `<div class="cat"><em class="fold"></em>${v[0]}</div>`
    : `<div class="var"><div class="vi">${varIcon(v[1])}</div>${v[0]}<svg class="eye ${v[2]}"><use href="#${v[2] === 'off' ? 'i-closed' : 'i-eye'}"/></svg></div>`
).join('');

const F = '<span class="f-ico">f</span>';
const field = v => `<span class="field">${v}</span>`;
const vec = '<div class="vec"><span><i>X</i>0.0</span><span><i>Y</i>0.0</span><span><i>Z</i>0.0</span></div>';
const asset = '<div class="asset"><span>选择资源<em></em></span><svg><use href="#i-arrow"/></svg><svg><use href="#i-search"/></svg></div>';

// pin: [color or exec, label, row height, connected]
const mapPins = (a, b, c) => [
    [GREEN, 'Value', 26, 1],
    [GREEN, '<span class="lab">In Range A</span>' + field(a), 30, 0],
    b ? [GREEN, '<span class="lab">In Range B</span>' + field(b), 30, 0] : [GREEN, 'In Range B', 26, 1],
    c ? [GREEN, '<span class="lab">Out Range A</span>' + field(c), 30, 0] : [GREEN, 'Out Range A', 26, 1],
    [GREEN, 'Out Range B', 26, 1]
];

const nodes = [
    { cls: 'event', x: 261, y: 275, w: 176, h: 74, title: 'PlayCollisionSounds', sub: '自定义事件', exec: 1,
      icon: '<svg width="16" height="16" viewBox="0 0 16 16"><path d="M8 1 L15 8 L8 15 L1 8 Z" fill="none" stroke="#eee" stroke-width="1.500"/><path d="M5 8 H9 M8 5 L11 8 L8 11 Z" fill="#eee" stroke="#eee"/></svg><div class="red"></div>',
      left: [], right: [['exec', '', 27, 1]] },
    { cls: 'blue', x: 549, y: 275, w: 262, h: 129, title: 'Get Physics Linear Velocity', sub: '目标是<q>Primitive Component</q>', exec: 1,
      left: [['exec', '', 27, 1], [BLUE, '目标', 26, 1], [PURPLE, '<span class="lab">Bone Name</span>' + field('None'), 30, 0]],
      right: [['exec', '', 27, 1], [YELLOW, 'Return Value', 26, 1]] },
    { cls: 'func', x: 869, y: 355, w: 170, h: 56, title: 'VectorLength', left: [[YELLOW, 'A', 26, 1]], right: [[GREEN, 'Return Value', 26, 1]] },
    { cls: 'func', x: 1093, y: 355, w: 249, h: 164, title: 'Map Range Clamped', left: mapPins('0.0'), right: [[GREEN, 'Return Value', 26, 1]] },
    { cls: 'blue', x: 1589, y: 291, w: 228, h: 374, title: 'Play Sound at Location', exec: 1, more: 1,
      left: [['exec', '', 27, 1], [BLUE, 'Sound', 26, 1], [YELLOW, 'Location', 26, 1],
        [VIOLET, '<div class="stack rot">Rotation' + vec + '</div>', 49, 0],
        [GREEN, 'Volume Multiplier', 26, 1], [GREEN, 'Pitch Multiplier', 26, 1],
        [GREEN, '<span class="lab">Start Time</span>' + field('0.0'), 30, 0],
        [DEEP, '<div class="stack">Attenuation Settings' + asset + '</div>', 44, 0],
        [DEEP, '<div class="stack">Concurrency Settings' + asset + '</div>', 44, 0],
        [DEEP, 'Owning Actor', 26, 0]],
      right: [['exec', '', 27, 0]] },
    { cls: 'func', x: 677, y: 787, w: 187, h: 72, title: 'Get Actor Scale 3D', sub: '目标是<q>Actor</q>', left: [[BLUE, '目标', 26, 1]], right: [[YELLOW, 'Return Value', 26, 1]] },
    { cls: 'func', x: 901, y: 803, w: 136, h: 108, title: 'Break Vector',
      icon: '<svg width="16" height="16" viewBox="0 0 16 16"><rect x="0" y="6" width="10" height="5" rx="1.500" fill="#4a8af0"/><path d="M9 7 L13 2 M9 10 L13 14" stroke="#fff" stroke-width="1.500"/></svg>',
      left: [[YELLOW, 'In Vec', 26, 1]], right: [[GREEN, 'X', 26, 1], [GREEN, 'Y', 26, 0], [GREEN, 'Z', 26, 0]] },
    { cls: 'func', x: 1173, y: 787, w: 258, h: 172, title: 'Map Range Clamped', left: mapPins('1.0', '3.0', '1.0'), right: [[GREEN, 'Return Value', 26, 1]] }
];

function pinIcon(color, on) {
    if (color === 'exec') return `<svg class="ex"><use href="#${on ? 'i-exec' : 'i-exec-open'}"/></svg>`;
    return `<svg style="color:${color}"><use href="#${on ? 'i-pin' : 'i-pin-open'}"/></svg>`;
}

function pinRow([color, label, h, on], right) {
    const text = `<div>${label}</div>`;
    return `<div class="pin" style="height:${h}px">${right ? text + pinIcon(color, on) : pinIcon(color, on) + text}</div>`;
}

const nodeHtml = nodes.map(n => `
    <div class="node ${n.cls}" style="left:${n.x - ORIGIN_X}px;top:${n.y - ORIGIN_Y}px;width:${n.w}px;height:${n.h}px">
        <div class="head ${n.sub ? 'tall' : ''}">${n.icon || F}${n.title}${n.sub ? `<small>${n.sub}</small>` : ''}</div>
        <div class="pins ${n.exec ? 'exec' : ''}">
            <div>${n.left.map(p => pinRow(p, false)).join('')}</div>
            <div class="right-pins">${n.right.map(p => pinRow(p, true)).join('')}</div>
        </div>
        ${n.more ? '<em class="more"></em>' : ''}
    </div>`).join('');

const varNodes = [
    ['Static Mesh Component', 261, 387, 181, BLUE, 'rgba(40,170,230,0.75)'],
    ['Max Speed to Volume', 645, 435, 169, GREEN, 'rgba(150,220,80,0.75)'],
    ['Min Volume', 677, 483, 132, GREEN, 'rgba(150,220,80,0.75)'],
    ['Max Volume', 677, 531, 132, GREEN, 'rgba(150,220,80,0.75)'],
    ['Collision Sound', 1413, 355, 137, BLUE, 'rgba(40,170,230,0.75)'],
    ['World Hit Location', 1413, 403, 152, YELLOW, 'rgba(235,195,60,0.75)'],
    ['Self', 533, 819, 132, BLUE, 'rgba(130,190,110,0.75)'],
    ['Minimum Pitch at Scale', 917, 931, 179, GREEN, 'rgba(150,220,80,0.75)']
];

const varHtml = varNodes.map(([name, x, y, w, color, glow]) =>
    `<div class="var-node" style="left:${x - ORIGIN_X}px;top:${y - ORIGIN_Y}px;width:${w}px;--glow:${glow}">${name}${pinIcon(color, 1)}</div>`).join('');

const absHtml = `<div class="var-node abs" style="left:${1030 - ORIGIN_X}px;top:${819 - ORIGIN_Y}px;width:134px;--glow:transparent">${pinIcon(GREEN, 1)}<b>ABS</b>${pinIcon(GREEN, 1)}</div>`;

document.getElementById('nodes').innerHTML = nodeHtml + varHtml + absHtml;

// wires: x1, y1, x2, y2, color, tangent
const wires = [
    [430, 332, 560, 332, '#b8b8b8', 40], [803, 332, 1600, 332, '#b8b8b8', 40],
    [425, 403.5, 560, 359, BLUE, 65], [802, 359, 882, 394.5, YELLOW, 42],
    [1026, 394.5, 1106, 394.5, GREEN, 40], [798, 451.5, 1106, 450.5, GREEN, 120],
    [792, 499.5, 1106, 476.5, GREEN, 150], [792, 547.5, 1106, 502.5, GREEN, 150],
    [1330, 394.5, 1600, 459.5, GREEN, 130], [1534, 371.5, 1600, 358.5, BLUE, 35],
    [1550, 419.5, 1600, 384.5, YELLOW, 30], [1419, 826.5, 1600, 485.5, GREEN, 165],
    [649, 835.5, 688, 842.5, BLUE, 18], [850, 842.5, 912, 842.5, YELLOW, 20],
    [1024, 842.5, 1040, 837.5, GREEN, 8], [1151, 837.5, 1186, 826.5, GREEN, 18],
    [1081, 947.5, 1186, 942.5, GREEN, 50]
];

document.getElementById('wires').innerHTML = wires.map(([x1, y1, x2, y2, c, t]) =>
    `<path d="M${x1} ${y1} C${x1 + t} ${y1} ${x2 - t} ${y2} ${x2} ${y2}" stroke="${c}"/>`).join('');
```
